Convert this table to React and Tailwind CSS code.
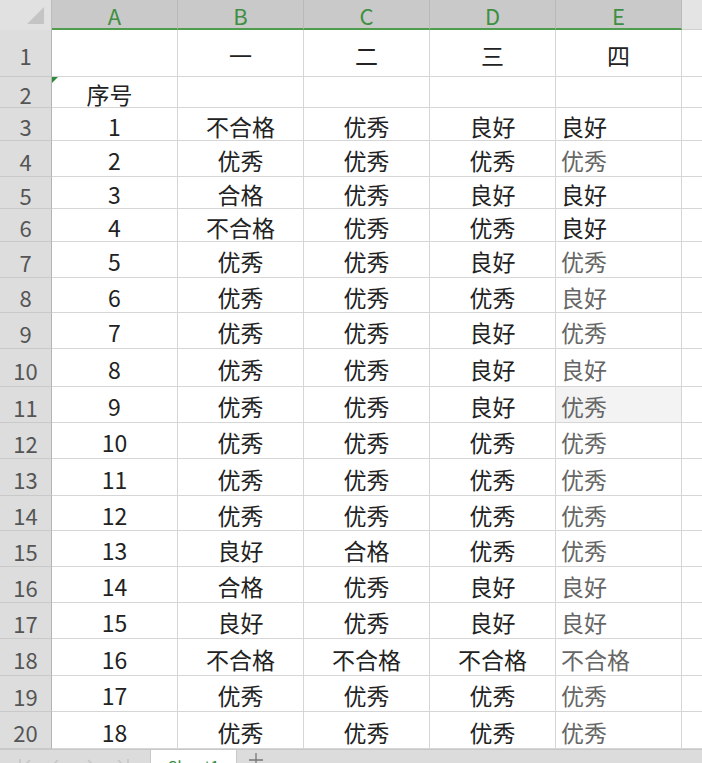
const font = { fontFamily: '"Noto Sans CJK SC", "Noto Sans", sans-serif' };

const cols = ['A', 'B', 'C', 'D', 'E'];

// [row no, height class, A, B, C, D, E, E is gray]
const rows = [
  [1, 'h-[47px]', '', '一', '二', '三', '四', false],
  [2, 'h-[31px]', '序号', '', '', '', '', false],
  [3, 'h-[33px]', '1', '不合格', '优秀', '良好', '良好', false],
  [4, 'h-[36px]', '2', '优秀', '优秀', '优秀', '优秀', true],
  [5, 'h-[32px]', '3', '合格', '优秀', '良好', '良好', false],
  [6, 'h-[33px]', '4', '不合格', '优秀', '优秀', '良好', false],
  [7, 'h-[36px]', '5', '优秀', '优秀', '良好', '优秀', true],
  [8, 'h-[35px]', '6', '优秀', '优秀', '优秀', '良好', true],
  [9, 'h-[36px]', '7', '优秀', '优秀', '良好', '优秀', true],
  [10, 'h-[38px]', '8', '优秀', '优秀', '良好', '良好', true],
  [11, 'h-[36px]', '9', '优秀', '优秀', '良好', '优秀', true],
  [12, 'h-[36px]', '10', '优秀', '优秀', '优秀', '优秀', true],
  [13, 'h-[37px]', '11', '优秀', '优秀', '优秀', '优秀', true],
  [14, 'h-[35px]', '12', '优秀', '优秀', '优秀', '优秀', true],
  [15, 'h-[36px]', '13', '良好', '合格', '优秀', '优秀', true],
  [16, 'h-[36px]', '14', '合格', '优秀', '良好', '良好', true],
  [17, 'h-[36px]', '15', '良好', '优秀', '良好', '良好', true],
  [18, 'h-[37px]', '16', '不合格', '不合格', '不合格', '不合格', true],
  [19, 'h-[36px]', '17', '优秀', '优秀', '优秀', '优秀', true],
  [20, 'h-[37px]', '18', '优秀', '优秀', '优秀', '优秀', true],
];

const Header = () => (
  <div className="flex h-[30px]">
    <div className="w-[52px] shrink-0 bg-[#e1e1e1] border-r border-[#bdbdbd] flex items-end justify-end pr-[7px] pb-[6px]">
      <svg width="17" height="17" viewBox="0 0 17 17">
        <polygon points="17,0 17,17 0,17" fill="#c4c4c4" />
      </svg>
    </div>
    {cols.map((c) => (
      <div
        key={c}
        className="w-[126px] shrink-0 bg-[#c9c9c9] border-r border-[#b9b9b9] border-b-2 border-b-[#4f9c4f] flex items-center justify-center text-[22px] leading-none text-[#3f8f42] pt-[1px]"
      >
        {c}
      </div>
    ))}
    <div className="flex-1 bg-[#e4e4e4] border-b border-[#cfcfcf]" />
  </div>
);

const Row = ({ r }) => {
  const [n, h, a, b, c, d, e, gray] = r;
  return (
    <div className={`flex ${h}`}>
      <div className="w-[52px] shrink-0 bg-[#dddddd] border-r border-[#b5b5b5] border-b border-b-[#c9c9c9] flex items-center justify-center pt-[4px] text-[22px] leading-none text-[#555]">
        {n}
      </div>
      <div
        className={`relative w-[126px] shrink-0 border-r border-b border-[#d6d6d6] flex items-center justify-center pt-[4px] text-[23px] leading-none text-[#222] ${
          n === 2 ? 'pr-[10px]' : ''
        }`}
      >
        {n === 2 && (
          <svg className="absolute left-0 top-0" width="6" height="6" viewBox="0 0 6 6">
            <polygon points="0,0 6,0 0,6" fill="#2e8b3a" />
          </svg>
        )}
        {a}
      </div>
      {[b, c, d].map((t, i) => (
        <div
          key={i}
          className="w-[126px] shrink-0 border-r border-b border-[#d6d6d6] flex items-center justify-center pt-[4px] text-[23px] leading-none text-[#222]"
        >
          {t}
        </div>
      ))}
      <div
        className={`w-[126px] shrink-0 border-r border-b border-[#d6d6d6] flex items-center pt-[4px] text-[23px] leading-none ${
          n === 1 ? 'justify-center' : 'justify-start pl-[5px]'
        } ${gray ? 'text-[#666]' : 'text-[#222]'} ${n === 11 ? 'bg-[#f3f3f3]' : 'bg-white'}`}
      >
        {e}
      </div>
      <div className="flex-1 border-b border-[#d6d6d6]" />
    </div>
  );
};

// faint sheet navigation arrows
const NavArrows = () => (
  <svg width="120" height="16" viewBox="0 0 120 16" fill="none" stroke="#c4c4c4" strokeWidth="1.5">
    <path d="M4 4v12M14 5l-6 6 6 6" />
    <path d="M42 5l-6 6 6 6" />
    <path d="M72 5l6 6-6 6" />
    <path d="M102 5l6 6-6 6M112 4v12" />
  </svg>
);

const TabBar = () => (
  <div className="flex h-[30px] bg-[#dcdcdc] border-t border-[#c8c8c8]">
    <div className="w-[150px] pl-[16px] pt-[5px]">
      <NavArrows />
    </div>
    <div className="w-[87px] bg-white border-x border-[#c8c8c8] flex justify-center pt-[4px] text-[16px] text-[#2f8c3a]">
      Sheet1
    </div>
    <div className="pl-[12px] pt-[3px]">
      <svg width="14" height="14" viewBox="0 0 14 14" stroke="#777" strokeWidth="1.3">
        <path d="M7 0v14M0 7h14" />
      </svg>
    </div>
  </div>
);

export default function App() {
  return (
    <div className="w-[702px] h-[763px] overflow-hidden bg-white" style={font}>
      <Header />
      {rows.map((r) => (
        <Row key={r[0]} r={r} />
      ))}
      <TabBar />
    </div>
  );
}
